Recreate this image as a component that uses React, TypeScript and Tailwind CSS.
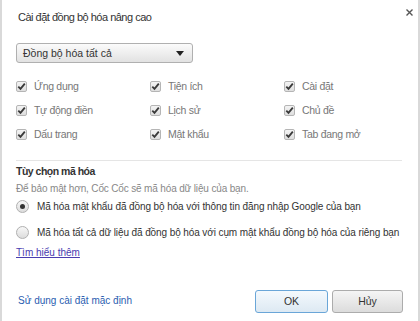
import React from "react";

function Check() {
  return (
    <span className="w-[11px] h-[11px] border border-[#b5b5b5] rounded-[2px] bg-gradient-to-b from-[#f4f4f4] to-[#dedede] flex items-center justify-center shrink-0">
      <svg width="9" height="9" viewBox="0 0 9 9">
        <path d="M1.3 4.6 L3.5 6.9 L7.8 1.6" fill="none" stroke="#3a3a3a" strokeWidth="1.8" />
      </svg>
    </span>
  );
}

function CB({ label }: { label: string }) {
  return (
    <div className="flex items-center gap-[7px] h-[24px]">
      <Check />
      <span className="text-[#777] text-[10.5px] tracking-[-0.3px]">{label}</span>
    </div>
  );
}

function Radio({ checked, label }: { checked?: boolean; label: string }) {
  return (
    <div className="flex items-center gap-[8px] h-[26px] whitespace-nowrap">
      <span className="w-[13px] h-[13px] rounded-full border border-[#b0b0b0] bg-gradient-to-b from-[#f7f7f7] to-[#dcdcdc] flex items-center justify-center shrink-0">
        {checked && <span className="w-[5px] h-[5px] rounded-full bg-[#333]" />}
      </span>
      <span className="text-[#333] text-[10px] tracking-[-0.1px]">{label}</span>
    </div>
  );
}

export default function App() {
  return (
    <div
      className="w-[420px] h-[321px] bg-white border-l-2 border-r-2 border-[#d9d9d9] relative text-[10px] leading-none overflow-hidden"
      style={{ fontFamily: '"Liberation Sans", Arial, sans-serif' }}
    >
      <svg className="absolute left-[404px] top-[9px]" width="7" height="7" viewBox="0 0 7 7">
        <path d="M0.5 0.5 L6.5 6.5 M6.5 0.5 L0.5 6.5" stroke="#555" strokeWidth="1.4" />
      </svg>
      <div className="px-[14px]">
        <div className="pt-[12px] h-[34px] text-[11px] tracking-[-0.5px] text-[#333] pl-[2px]">Cài đặt đồng bộ hóa nâng cao</div>
        <div className="mt-[9px] w-[177px] h-[20px] border border-[#b0b0b0] rounded-[3px] bg-gradient-to-b from-[#fbfbfb] to-[#e2e2e2] flex items-center justify-between pl-[6px] pr-[8px]">
          <span className="text-[#333] text-[10.5px]">Đồng bộ hóa tất cả</span>
          <svg width="8" height="5" viewBox="0 0 8 5"><path d="M0 0 H8 L4 5 Z" fill="#222" /></svg>
        </div>
        <div className="mt-[11px] grid grid-cols-[134px_134px_1fr]">
          <CB label="Ứng dụng" />
          <CB label="Tiện ích" />
          <CB label="Cài đặt" />
          <CB label="Tự động điền" />
          <CB label="Lịch sử" />
          <CB label="Chủ đề" />
          <CB label="Dấu trang" />
          <CB label="Mật khẩu" />
          <CB label="Tab đang mở" />
        </div>
        <div className="mt-[14px] border-t border-[#e5e5e5] mr-[2px]" />
        <div className="mt-[5px] font-bold text-[#333] text-[10.5px] tracking-[-0.5px]">Tùy chọn mã hóa</div>
        <div className="mt-[7px] text-[#888] text-[10px] tracking-[-0.15px]">Để bảo mật hơn, Cốc Cốc sẽ mã hóa dữ liệu của bạn.</div>
        <div className="mt-0">
          <Radio checked label="Mã hóa mật khẩu đã đồng bộ hóa với thông tin đăng nhập Google của bạn" />
          <Radio label="Mã hóa tất cả dữ liệu đã đồng bộ hóa với cụm mật khẩu đồng bộ hóa của riêng bạn" />
        </div>
        <div className="mt-[2px] text-[#4a3cb0] underline">Tìm hiểu thêm</div>
        <div className="mt-[32px] flex items-center">
          <span className="ml-[2px] text-[#2a5db0]">Sử dụng cài đặt mặc định</span>
          <div className="ml-auto flex gap-[4px] mr-[1px]">
            <button className="w-[73px] h-[23px] border border-[#6aa6d8] rounded-[3px] bg-gradient-to-b from-[#f4f9fd] to-[#dde9f3] text-[#333] text-[10.5px]">OK</button>
            <button className="w-[71px] h-[23px] border border-[#acacac] rounded-[3px] bg-gradient-to-b from-[#f5f5f5] to-[#dcdcdc] text-[#333] text-[10.5px]">Hủy</button>
          </div>
        </div>
      </div>
    </div>
  );
}
